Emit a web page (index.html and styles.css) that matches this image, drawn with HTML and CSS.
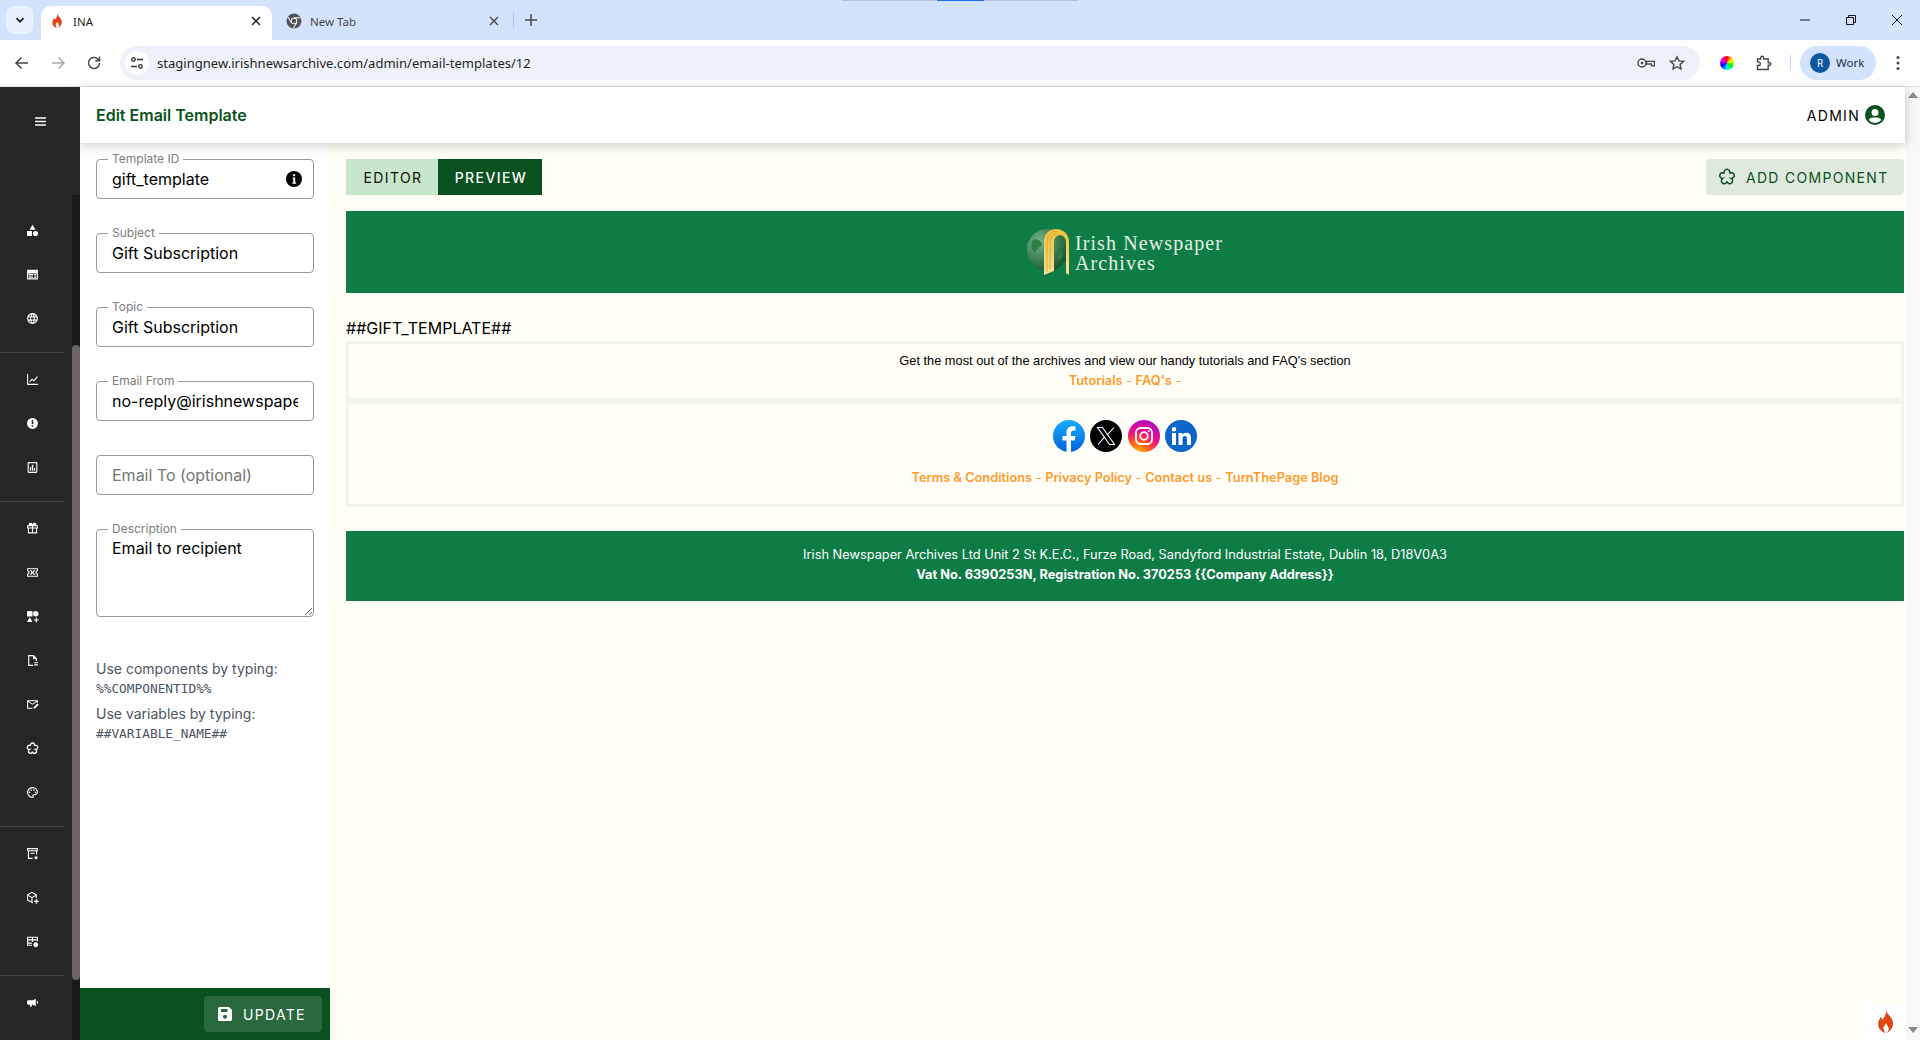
FILE: index.html
```html
<!DOCTYPE html>
<html lang="en">
<head>
  <meta charset="UTF-8">
  <meta name="viewport" content="width=device-width, initial-scale=1.0">
  <title>INA</title>
  <link rel="stylesheet" href="styles.css">
</head>
<body>
  <div class="share-bar"><span class="share-blue"></span></div>

  <!-- browser chrome -->
  <div class="tabstrip">
    <div class="tab-search">
      <svg width="12" height="12" viewBox="0 0 12 12"><path d="M2.500 4.200 6 7.700l3.500-3.500" fill="none" stroke="#1f1f1f" stroke-width="1.700"/></svg>
    </div>
    <div class="tab tab-active">
      <svg class="fav" width="16" height="16" viewBox="2 0 20 24"><path class="flame" d="M12.500 1c.8 3.500 5.500 5.800 6.500 10.500 1 5.300-2.500 9.800-6 11 2-1.500 2.800-3.800 1.500-6-.5-.9-1.500-1.500-1.700-3-1.200 1-2.300 2.200-2.600 3.600-.4 2 .5 4 1.800 5.400-4-1-7.500-4.500-7-9.500.2-2.500 1.700-3.800 2.500-6 .9.800 1.300 1.800 1.500 3C10.500 7.500 13 5 12.500 1z"/></svg>
      <span class="tab-title">INA</span>
      <svg class="tab-x" width="10" height="10" viewBox="0 0 10 10"><path d="M1 1l8 8M9 1L1 9" stroke="#1f1f1f" stroke-width="1.500"/></svg>
    </div>
    <div class="tab tab-idle">
      <svg class="fav" width="16" height="16" viewBox="0 0 16 16"><circle cx="8" cy="8" r="7.500" fill="#50555b"/><circle cx="8" cy="8" r="3.200" fill="#fff"/><circle cx="8" cy="8" r="2.300" fill="#50555b"/><path d="M8 4.800h6.500M5.200 9.600L2 4M10.800 9.600L7.500 15" stroke="#fff" stroke-width="1"/></svg>
      <span class="tab-title">New Tab</span>
      <svg class="tab-x" width="10" height="10" viewBox="0 0 10 10"><path d="M1 1l8 8M9 1L1 9" stroke="#474747" stroke-width="1.400"/></svg>
    </div>
    <span class="tab-sep"></span>
    <svg class="tab-plus" width="12" height="12" viewBox="0 0 12 12"><path d="M6 0v12M0 6h12" stroke="#474747" stroke-width="1.500"/></svg>
    <div class="win-controls">
      <svg width="12" height="12" viewBox="0 0 12 12"><path d="M1 6h10" stroke="#111" stroke-width="1"/></svg>
      <svg width="12" height="12" viewBox="0 0 12 12"><path d="M1.500 3.500h7v7h-7zM3.500 3.500v-2h7v7h-2" fill="none" stroke="#111" stroke-width="1"/></svg>
      <svg width="12" height="12" viewBox="0 0 12 12"><path d="M1 1l10 10M11 1L1 11" stroke="#111" stroke-width="1"/></svg>
    </div>
  </div>

  <div class="toolbar">
    <svg class="tool" width="16" height="16" viewBox="0 0 16 16"><path d="M14 8H2.500M7.500 2.500L2 8l5.500 5.500" fill="none" stroke="#474747" stroke-width="1.500"/></svg>
    <svg class="tool" width="16" height="16" viewBox="0 0 16 16"><path d="M2 8h11.500M8.500 2.500L14 8l-5.500 5.500" fill="none" stroke="#a9abad" stroke-width="1.500"/></svg>
    <svg class="tool" width="16" height="16" viewBox="0 0 16 16"><path d="M13.500 8a5.500 5.500 0 1 1-1.600-3.900L13.500 5.700M13.500 1.500v4.200H9.300" fill="none" stroke="#474747" stroke-width="1.500"/></svg>
    <div class="omnibox">
      <span class="site-info">
        <svg width="14" height="14" viewBox="0 0 14 14"><circle cx="3.500" cy="3.500" r="1.800" fill="none" stroke="#333" stroke-width="1.300"/><circle cx="10.500" cy="10.500" r="1.800" fill="none" stroke="#333" stroke-width="1.300"/><path d="M7 3.500h6M1 10.500h6" stroke="#333" stroke-width="1.300"/></svg>
      </span>
      <span class="url">stagingnew.irishnewsarchive.com/admin/email-templates/12</span>
      <svg class="omni-key" width="18" height="10" viewBox="0 0 18 10"><circle cx="5" cy="5" r="4" fill="none" stroke="#474747" stroke-width="1.400"/><circle cx="5" cy="5" r="1.300" fill="#474747"/><path d="M9.500 3.300h8v4.500h-3V6h-5z" fill="none" stroke="#474747" stroke-width="1.300"/></svg>
      <svg class="omni-star" width="16" height="16" viewBox="0 0 16 16"><path d="M8 1.800l1.900 4.100 4.500.5-3.300 3 .9 4.500L8 11.700l-4 2.200.9-4.500-3.300-3 4.500-.5z" fill="none" stroke="#474747" stroke-width="1.400"/></svg>
    </div>
    <span class="wheel"></span>
    <svg class="ext" width="16" height="16" viewBox="0 0 16 16"><path d="M1.500 4h3.200V2.700a1.500 1.500 0 0 1 3 0V4h4.500v3.700h1.300a1.300 1.300 0 0 1 0 2.600h-1.300v4.200h-10.700v-4h1a1.800 1.800 0 0 0 0-3.600h-1z" fill="none" stroke="#474747" stroke-width="1.400"/></svg>
    <span class="tool-sep"></span>
    <div class="profile"><span class="avatar">R</span><span class="profile-name">Work</span></div>
    <svg class="kebab" width="4" height="16" viewBox="0 0 4 16"><circle cx="2" cy="2.500" r="1.500" fill="#474747"/><circle cx="2" cy="8" r="1.500" fill="#474747"/><circle cx="2" cy="13.500" r="1.500" fill="#474747"/></svg>
  </div>

  <div class="app">
    <aside class="sidebar">
      <div class="side-col">
        <div class="nav-item nav-menu">
          <svg viewBox="0 0 24 24"><path d="M2 4h20v3H2zM2 10.500h20v3H2zM2 17h20v3H2z"/></svg>
        </div>
        <div class="nav-group nav-first">
          <div class="nav-item"><svg viewBox="0 0 24 24"><path d="M12 1.500l5.500 9h-11zM2 13h9v9H2z"/><circle cx="17.500" cy="17.500" r="4.700"/></svg></div>
          <div class="nav-item"><svg viewBox="0 0 24 24"><path fill-rule="evenodd" d="M2 3h20v18H2zM4 10v9h16v-9zM5 11h8v3H5zM15 11h4v3h-4zM5 15.500h8V18H5zM15 15.500h4V18h-4z"/></svg></div>
          <div class="nav-item"><svg viewBox="0 0 24 24"><path d="M11.990 2C6.470 2 2 6.480 2 12s4.470 10 9.990 10C17.520 22 22 17.520 22 12S17.520 2 11.990 2zm6.930 6h-2.950c-.32-1.250-.78-2.450-1.380-3.560 1.840.63 3.370 1.910 4.330 3.560zM12 4.040c.83 1.200 1.480 2.530 1.910 3.960h-3.820c.43-1.430 1.080-2.760 1.910-3.960zM4.260 14C4.100 13.360 4 12.690 4 12s.1-1.360.26-2h3.380c-.08.66-.14 1.320-.14 2 0 .68.06 1.340.14 2H4.260zm.82 2h2.950c.32 1.250.78 2.450 1.380 3.560-1.840-.63-3.370-1.900-4.330-3.560zm2.950-8H5.080c.96-1.660 2.490-2.930 4.330-3.560C8.810 5.550 8.350 6.750 8.030 8zM12 19.960c-.83-1.200-1.480-2.530-1.910-3.960h3.820c-.43 1.430-1.080 2.760-1.910 3.960zM14.340 14H9.660c-.09-.66-.16-1.320-.16-2 0-.68.07-1.350.16-2h4.680c.09.65.16 1.320.16 2 0 .68-.07 1.340-.16 2zm.25 5.560c.6-1.110 1.060-2.310 1.380-3.560h2.950c-.96 1.650-2.490 2.930-4.330 3.560zM16.360 14c.08-.66.14-1.320.14-2 0-.68-.06-1.340-.14-2h3.380c.16.64.26 1.310.26 2s-.1 1.360-.26 2h-3.380z"/></svg></div>
        </div>
        <div class="nav-group">
          <div class="nav-item"><svg viewBox="0 0 24 24"><path d="M2 2h2v18h18v2H2zM6 15.500l5-5.500 3.500 3L20.500 6 22 7.300l-7.300 8.400-3.500-3-3.800 4.200z"/></svg></div>
          <div class="nav-item"><svg viewBox="0 0 24 24"><path d="M12 2C6.480 2 2 6.480 2 12s4.480 10 10 10 10-4.480 10-10S17.520 2 12 2zm1.500 16h-3v-3h3v3zm0-5h-3V6h3v7z"/></svg></div>
          <div class="nav-item"><svg viewBox="0 0 24 24"><path d="M19 2H5C3.900 2 3 2.900 3 4v16c0 1.100.9 2 2 2h14c1.100 0 2-.9 2-2V4c0-1.100-.9-2-2-2zm0 18H5V4h14v16z"/><path d="M7 11h2.500v7H7zM10.800 7h2.500v11h-2.500zM14.500 13H17v5h-2.500z"/></svg></div>
        </div>
        <div class="nav-group">
          <div class="nav-item"><svg viewBox="0 0 24 24"><path fill-rule="evenodd" d="M8 1.500c1.800 0 3.200 1 4 2.500.8-1.500 2.200-2.500 4-2.500 2 0 3 1.500 3 3 0 .6-.1 1-.3 1.500H21c.6 0 1 .4 1 1V12h-1.500v8c0 .6-.4 1-1 1h-15c-.6 0-1-.4-1-1v-8H2V7c0-.6.4-1 1-1h2.300C5.100 5.500 5 5.100 5 4.500c0-1.500 1-3 3-3zM5.500 12v7H11v-7zM13 12v7h5.500v-7zM4 8v2h7V8zM13 8v2h7V8z"/></svg></div>
          <div class="nav-item"><svg viewBox="0 0 24 24"><path fill-rule="evenodd" d="M2 4h20v5.500a2.500 2.500 0 0 0 0 5V20H2v-5.500a2.500 2.500 0 0 0 0-5zM4 6v2.200a4 4 0 0 1 0 7.600V18h16v-2.200a4 4 0 0 1 0-7.600V6zM7 8h3l2 2.500L14 8h3l-3 4 3 4h-3l-2-2.500L10 16H7l3-4z"/></svg></div>
          <div class="nav-item"><svg viewBox="0 0 24 24"><path d="M2 2h10v10H2z"/><circle cx="18" cy="7" r="5"/><path d="M7 13.500l5 8.500H2zM18 14h2v3.500h3.500v2H20V23h-2v-3.500h-3.500v-2H18z"/></svg></div>
          <div class="nav-item"><svg viewBox="0 0 24 24"><path d="M4 2h10l6 6v5h-2V9h-5V4H6v16h7v2H4zM15 15h7v2h-7zM15 19h7v2h-7z"/></svg></div>
          <div class="nav-item"><svg viewBox="0 0 24 24"><path d="M2 4h20v4l-2 2V7.500l-8 5-8-5V18h9l-2 2H2zM4.500 6l7.500 4.700L19.500 6zM14 17l7-7 2.500 2.500-7 7H14z"/></svg></div>
          <div class="nav-item"><svg viewBox="0 0 24 24"><path class="piece" d="M8.500 7.100A3.800 3.800 0 1 1 15.500 7.100A3.800 3.800 0 1 1 17.700 13.850A3.800 3.800 0 1 1 12 18A3.800 3.800 0 1 1 6.300 13.850A3.800 3.800 0 1 1 8.500 7.100z"/></svg></div>
          <div class="nav-item"><svg viewBox="0 0 24 24"><path d="M12 22C6.490 22 2 17.510 2 12S6.490 2 12 2s10 4.040 10 9c0 3.310-2.690 6-6 6h-1.770c-.28 0-.5.22-.5.5 0 .12.05.23.13.33.41.47.64 1.060.64 1.670 0 1.380-1.120 2.500-2.500 2.500zm0-18c-4.410 0-8 3.590-8 8s3.590 8 8 8c.28 0 .5-.22.5-.5 0-.16-.08-.28-.14-.35-.41-.46-.63-1.050-.63-1.650 0-1.380 1.120-2.500 2.500-2.500H16c2.210 0 4-1.790 4-4 0-3.860-3.590-7-8-7z"/><circle cx="6.500" cy="11.500" r="1.500"/><circle cx="9.500" cy="7.500" r="1.500"/><circle cx="14.500" cy="7.500" r="1.500"/><circle cx="17.500" cy="11.500" r="1.500"/></svg></div>
        </div>
        <div class="nav-group">
          <div class="nav-item"><svg viewBox="0 0 24 24"><path d="M2 2h20v6h-1.500v6h-2V8h-13v12H12v2H3.500V8H2zM4 4v2h16V4zM8 10.500h8v2H8zM18.500 15.500l1.200 2.500 2.800.3-2 2 .5 2.700-2.500-1.400-2.500 1.400.5-2.700-2-2 2.800-.3z"/></svg></div>
          <div class="nav-item"><svg viewBox="0 0 24 24"><path fill-rule="evenodd" d="M11 1.500l9 5v6.300h-2V9l-6 3.400V20l1 .5V23l-2-1-9-5V6.500zM4.200 7.500L11 11.200l6.800-3.700L11 3.800zM3.800 9v6.800l6.200 3.500v-6.900zM18 15h2.500v3h3v2.500h-3v3H18v-3h-3V18h3z"/></svg></div>
          <div class="nav-item"><svg viewBox="0 0 24 24"><path fill-rule="evenodd" d="M2 3h20v8.500h-2V10h-7v3h-2v-3H4v4h7v2H4v2h7v2H2zM4 5v3h7V5zM13 5v3h7V5z"/><circle cx="18" cy="18" r="4.500"/></svg></div>
        </div>
        <div class="nav-group nav-last">
          <div class="nav-item"><svg viewBox="0 0 24 24"><path d="M4 8h9l5-3v14l-5-3h-2l-1 4H7l1-4H4c-1.100 0-2-.9-2-2v-4c0-1.100.9-2 2-2zM20 8.500c1.300.7 2 2 2 3.500s-.7 2.800-2 3.500z"/></svg></div>
        </div>
      </div>
      <div class="side-scroll"><div class="side-thumb"></div></div>
    </aside>

    <div class="content">
      <header class="topbar">
        <h1 class="page-title">Edit Email Template</h1>
        <div class="admin">
          <span>ADMIN</span>
          <svg width="20" height="20" viewBox="0 0 20 20"><path fill="#0a5120" d="M10 0a10 10 0 1 0 0 20 10 10 0 0 0 0-20zm0 4a3.500 3.500 0 1 1 0 7 3.500 3.500 0 0 1 0-7zm0 14a8 8 0 0 1-6.300-3c.6-1.500 2.300-2.600 4.300-2.600h4c2 0 3.700 1.100 4.300 2.600A8 8 0 0 1 10 18z"/></svg>
        </div>
      </header>

      <div class="workspace">
        <section class="panel">
          <div class="panel-fields">
            <fieldset class="field">
              <legend>Template ID</legend>
              <div class="field-row">
                <input type="text" value="gift_template">
                <svg class="info" width="16" height="16" viewBox="0 0 16 16"><circle cx="8" cy="8" r="8" fill="#000"/><path fill="#fff" d="M6.600 6.500h2.600v5h1v1.300H6.300v-1.300h1V7.800h-.7zM7.100 3.200h2.100v2H7.100z"/></svg>
              </div>
            </fieldset>
            <fieldset class="field">
              <legend>Subject</legend>
              <input type="text" value="Gift Subscription">
            </fieldset>
            <fieldset class="field">
              <legend>Topic</legend>
              <input type="text" value="Gift Subscription">
            </fieldset>
            <fieldset class="field">
              <legend>Email From</legend>
              <input type="text" value="no-reply@irishnewspaperarchives.com">
            </fieldset>
            <input class="plain-input" type="text" placeholder="Email To (optional)">
            <fieldset class="field field-area">
              <legend>Description</legend>
              <textarea rows="3">Email to recipient</textarea>
            </fieldset>
            <div class="help">
              <p>Use components by typing:</p>
              <code>%%COMPONENTID%%</code>
              <p>Use variables by typing:</p>
              <code>##VARIABLE_NAME##</code>
            </div>
          </div>
          <div class="panel-foot">
            <button class="update-btn">
              <svg width="14" height="14" viewBox="0 0 14 14"><path fill="#fff" fill-rule="evenodd" d="M1.500 0H11l3 3v9.500a1.500 1.500 0 0 1-1.500 1.500h-11A1.500 1.500 0 0 1 0 12.500v-11A1.500 1.500 0 0 1 1.500 0zM3 2v3h6.500V2zm4 5.800a2 2 0 1 0 0 4 2 2 0 0 0 0-4z"/></svg>
              UPDATE
            </button>
          </div>
        </section>

        <main class="preview">
          <div class="preview-actions">
            <div class="tabs">
              <button class="tab-btn">EDITOR</button>
              <button class="tab-btn tab-btn-on">PREVIEW</button>
            </div>
            <button class="add-btn">
              <svg width="18" height="18" viewBox="0 0 24 24"><path class="piece-green" d="M8.500 7.100A3.800 3.800 0 1 1 15.500 7.100A3.800 3.800 0 1 1 17.700 13.850A3.800 3.800 0 1 1 12 18A3.800 3.800 0 1 1 6.300 13.850A3.800 3.800 0 1 1 8.500 7.100z"/></svg>
              ADD COMPONENT
            </button>
          </div>

          <div class="mail-banner">
            <svg class="logo-mark" width="43" height="48" viewBox="0 0 43 48">
              <defs>
                <radialGradient id="globe" cx="30%" cy="30%" r="80%"><stop offset="0" stop-color="#74b488"/><stop offset="1" stop-color="#12522c"/></radialGradient>
                <linearGradient id="gold" x1="0" y1="0" x2="0" y2="1"><stop offset="0" stop-color="#eec23a"/><stop offset="1" stop-color="#f6e09a"/></linearGradient>
              </defs>
              <circle cx="20.500" cy="22" r="21" fill="url(#globe)"/>
              <path d="M6 12c-3 6-2 10 2 13 1-4 5-6 7-8-1-5-5-7-9-5zM31 24c3-1 5 1 5 4-2 3-4 5-6 3z" fill="#2f7d48"/>
              <path d="M17 47V14C17 6 22 1 29 1s13 5 13 13v33l-3-2V14c0-4-3-7-6-7s-6 3-6 7v29z" fill="url(#gold)"/>
              <path d="M20 44V14C20 7 25 3 30 3M23 41V14c0-5 3-8 7-8" fill="none" stroke="#c99a22" stroke-width=".7"/>
            </svg>
            <div class="logo-text">Irish Newspaper<br>Archives</div>
          </div>

          <div class="mail-var">##GIFT_TEMPLATE##</div>

          <div class="mail-box mail-help">
            <div class="help-line">Get the most out of the archives and view our handy tutorials and FAQ's section</div>
            <div class="links"><b>Tutorials</b> - <b>FAQ's</b> -</div>
          </div>

          <div class="mail-box mail-social">
            <div class="socials">
              <svg width="32" height="32" viewBox="0 0 32 32">
                <defs><linearGradient id="fb" x1="0" y1="0" x2="0" y2="1"><stop offset="0" stop-color="#18acfe"/><stop offset="1" stop-color="#0163e0"/></linearGradient></defs>
                <circle cx="16" cy="16" r="16" fill="url(#fb)"/>
                <path fill="#fff" d="M13.500 32V20.500H9.500V16h4v-3.500c0-4 2.400-6.200 6-6.200 1.700 0 3 .2 3 .2v3.900h-1.900c-2 0-2.600 1.200-2.600 2.500V16h4.400l-.7 4.500h-3.700V32z"/>
              </svg>
              <svg width="32" height="32" viewBox="0 0 32 32">
                <circle cx="16" cy="16" r="16" fill="#000"/>
                <path fill="none" stroke="#fff" stroke-width="1.100" d="M7.500 7.500h5l12 17h-5zM24 7.500l-7 7.700M8 24.500l7-7.800"/>
              </svg>
              <svg width="32" height="32" viewBox="0 0 32 32">
                <defs><radialGradient id="ig" cx="30%" cy="105%" r="110%"><stop offset="0" stop-color="#fec30a"/><stop offset=".35" stop-color="#fb5b1f"/><stop offset=".65" stop-color="#ee0a8c"/><stop offset="1" stop-color="#a90fc4"/></radialGradient></defs>
                <circle cx="16" cy="16" r="16" fill="url(#ig)"/>
                <rect x="8" y="8" width="16" height="16" rx="4.500" fill="none" stroke="#fff" stroke-width="1.800"/>
                <circle cx="16" cy="16" r="3.800" fill="none" stroke="#fff" stroke-width="1.800"/>
                <circle cx="20.800" cy="11.200" r="1" fill="#fff"/>
              </svg>
              <svg width="32" height="32" viewBox="0 0 32 32">
                <circle cx="16" cy="16" r="16" fill="#0a66c8"/>
                <path fill="#fff" d="M7 13h4v12H7zM9 7a2.300 2.300 0 1 1 0 4.600A2.300 2.300 0 0 1 9 7zM13.500 13h3.800v1.700c.7-1.200 2.100-2 3.900-2 3.300 0 4.800 2 4.800 5.500V25h-4v-6c0-1.700-.6-2.900-2.200-2.900-1.500 0-2.300 1.100-2.300 2.900v6h-4z"/>
              </svg>
            </div>
            <div class="links links-foot"><b>Terms &amp; Conditions</b> - <b>Privacy Policy</b> - <b>Contact us</b> - <b>TurnThePage Blog</b></div>
          </div>

          <div class="mail-footer">
            <div>Irish Newspaper Archives Ltd Unit 2 St K.E.C., Furze Road, Sandyford Industrial Estate, Dublin 18, D18V0A3</div>
            <div class="mail-footer-strong">Vat No. 6390253N, Registration No. 370253 {{Company Address}}</div>
          </div>
        </main>
      </div>
    </div>

    <div class="page-scroll">
      <svg width="10" height="6" viewBox="0 0 10 6"><path d="M5 0l5 6H0z" fill="#8a8a8a"/></svg>
      <svg width="10" height="6" viewBox="0 0 10 6"><path d="M5 6l5-6H0z" fill="#8a8a8a"/></svg>
    </div>

    <div class="debug-flame">
      <svg width="19" height="24" viewBox="3.500 0.500 17 23"><path class="flame" d="M12.500 1c.8 3.500 5.500 5.800 6.500 10.500 1 5.300-2.500 9.800-6 11 2-1.500 2.800-3.800 1.500-6-.5-.9-1.500-1.500-1.700-3-1.200 1-2.300 2.200-2.600 3.600-.4 2 .5 4 1.800 5.400-4-1-7.500-4.500-7-9.500.2-2.500 1.700-3.800 2.500-6 .9.800 1.300 1.800 1.500 3C10.500 7.500 13 5 12.500 1z"/></svg>
    </div>
  </div>
</body>
</html>
```

FILE: styles.css
```css
* {
  box-sizing: border-box;
}
html, body {
  margin: 0;
  height: 1040px;
  overflow: hidden;
}
body {
  display: flex;
  flex-direction: column;
  font-family: Inter, "Noto Sans", sans-serif;
  color: #000;
  position: relative;
}
button {
  font-family: inherit;
  border: none;
  cursor: pointer;
}
.flame {
  fill: #dd4814;
}

/* browser chrome */
.share-bar {
  position: absolute;
  top: 0;
  left: 842px;
  width: 236px;
  height: 1px;
  background: #b9c4d4;
}
.share-blue {
  display: block;
  width: 47px;
  height: 1px;
  margin-left: 95px;
  background: #1a73e8;
}
.tabstrip {
  height: 40px;
  flex: none;
  display: flex;
  align-items: flex-end;
  background: #d3e3fd;
  padding-left: 6px;
}
.tab-search {
  width: 27px;
  height: 28px;
  margin-bottom: 6px;
  margin-right: 8px;
  border-radius: 8px;
  background: #e9f1fe;
  display: flex;
  align-items: center;
  justify-content: center;
}
.tab {
  height: 34px;
  width: 231px;
  display: flex;
  align-items: center;
  padding: 0 11px 4px 8px;
  font-family: "Noto Sans", sans-serif;
  font-size: 11.500px;
}
.tab-active {
  background: #fff;
  border-radius: 10px 10px 0 0;
  padding-left: 8px;
  color: #1f1f1f;
}
.tab-idle {
  color: #474747;
  width: 241px;
  padding-left: 14px;
  padding-right: 14px;
}
.fav {
  flex: none;
  margin-right: 8px;
}
.tab-title {
  flex: 1;
}
.tab-sep {
  width: 1px;
  height: 16px;
  margin: 0 0 12px 0;
  background: #a8c7fa;
}
.tab-plus {
  margin: 0 0 14px 11px;
}
.win-controls {
  margin-left: auto;
  width: 138px;
  padding: 0 17px;
  display: flex;
  justify-content: space-between;
  align-self: flex-start;
  margin-top: 14px;
}
.toolbar {
  height: 47px;
  flex: none;
  display: flex;
  align-items: center;
  background: #fff;
  border-bottom: 1px solid #e0e0e0;
  padding: 0 0 1px 14px;
  border-radius: 10px 10px 0 0;
}
.tool {
  margin-right: 20px;
}
.omnibox {
  width: 1580px;
  height: 34px;
  margin-left: -2px;
  border-radius: 17px;
  background: #edf2fa;
  display: flex;
  align-items: center;
  padding: 0 11px 0 5px;
}
.site-info {
  width: 24px;
  height: 24px;
  border-radius: 50%;
  background: #fff;
  display: flex;
  align-items: center;
  justify-content: center;
  margin-right: 8px;
}
.url {
  flex: 1;
  font-family: "Noto Sans", sans-serif;
  font-size: 13.050px;
  color: #1f1f1f;
}
.omni-key {
  margin-right: 14px;
}
.omni-star {
  margin-right: 4px;
}
.wheel {
  width: 14px;
  height: 14px;
  margin-left: 20px;
  border-radius: 50%;
  background: conic-gradient(#f00, #ff0, #0f0, #0ff, #00f, #f0f, #f00);
}
.ext {
  margin-left: 22px;
}
.tool-sep {
  width: 1px;
  height: 16px;
  margin: 0 9px 0 18px;
  background: #c2d6f5;
}
.profile {
  width: 76px;
  height: 34px;
  border-radius: 17px;
  background: #d3e3fd;
  display: flex;
  align-items: center;
  padding-left: 10px;
  font-family: "Noto Sans", sans-serif;
  font-size: 11.500px;
  color: #1f2a44;
}
.avatar {
  width: 20px;
  height: 20px;
  border-radius: 50%;
  background: #0b57a0;
  color: #fff;
  font-size: 10px;
  display: flex;
  align-items: center;
  justify-content: center;
  margin-right: 6px;
}
.kebab {
  margin-left: 20px;
}

/* app shell */
.app {
  flex: 1;
  min-height: 0;
  display: flex;
  position: relative;
}
.sidebar {
  width: 80px;
  flex: none;
  display: flex;
  background: #262626;
}
.side-col {
  width: 72px;
  flex: none;
  padding-top: 12px;
}
.side-scroll {
  width: 8px;
  margin-top: 108px;
  padding-top: 150px;
  background: #1a1a1a;
}
.side-thumb {
  height: 635px;
  border-radius: 4px;
  background: #6b6464;
}
.nav-item {
  width: 64px;
  height: 44px;
  display: flex;
  align-items: center;
  justify-content: center;
}
.nav-item svg {
  width: 13px;
  height: 13px;
  fill: #fff;
}
.nav-menu {
  padding-left: 16px;
}
.nav-item .piece {
  fill: none;
  stroke: #fff;
  stroke-width: 2.500;
}
.nav-group {
  width: 64px;
  padding: 4px 0 12px;
  border-bottom: 1px solid #444;
}
.nav-first {
  margin-top: 61px;
}
.nav-last {
  border-bottom: none;
}
.content {
  flex: 1;
  min-width: 0;
  display: flex;
  flex-direction: column;
}
.page-scroll {
  width: 15px;
  flex: none;
  background: #f8f8f8;
  display: flex;
  flex-direction: column;
  justify-content: space-between;
  align-items: center;
  padding: 5px 0 7px;
}
.topbar {
  height: 56px;
  flex: none;
  background: #fff;
  display: flex;
  align-items: center;
  justify-content: space-between;
  padding: 0 20px 0 16px;
  box-shadow: 0 2px 10px rgba(60, 60, 40, .28);
  position: relative;
  z-index: 2;
}
.page-title {
  margin: 0;
  font-size: 16px;
  font-weight: 600;
  color: #0a5120;
}
.admin {
  display: flex;
  align-items: center;
  gap: 5px;
  font-size: 14px;
  font-weight: 400;
  letter-spacing: 1.300px;
}
.workspace {
  flex: 1;
  min-height: 0;
  display: flex;
}

/* left form */
.panel {
  width: 250px;
  flex: none;
  background: #fff;
  display: flex;
  flex-direction: column;
}
.panel-fields {
  flex: 1;
  padding: 10px 16px 0;
  display: flex;
  flex-direction: column;
  gap: 28px;
}
.field {
  margin: 0;
  padding: 0 0 5px;
  min-width: 0;
  border: 1px solid #999;
  border-radius: 4px;
}
.field legend {
  margin-left: 11px;
  padding: 0 4px;
  font-size: 12px;
  line-height: 12px;
  color: #7d7d7d;
}
.field input, .plain-input, .field textarea {
  display: block;
  width: 100%;
  border: none;
  outline: none;
  background: transparent;
  font-family: inherit;
  font-size: 16px;
  color: #000;
  padding: 0 15px;
}
.field input {
  height: 28px;
}
.field-row {
  display: flex;
  align-items: center;
}
.field-row input {
  flex: 1;
  min-width: 0;
}
.info {
  flex: none;
  margin-right: 11px;
}
.plain-input {
  height: 40px;
  margin-top: 6px;
  border: 1px solid #999;
  border-radius: 4px;
}
.plain-input::placeholder {
  color: #757575;
  opacity: 1;
}
.field-area {
  padding: 0;
}
.field textarea {
  height: 81px;
  padding: 3px 15px;
  line-height: 20px;
  resize: vertical;
}
.help {
  margin-top: 14px;
  font-size: 14px;
  color: #4b5563;
}
.help p {
  margin: 0;
  line-height: 20px;
}
.help code {
  display: block;
  margin-bottom: 5px;
  font-family: "DejaVu Sans Mono", monospace;
  font-size: 12.800px;
  line-height: 20px;
}
.panel-foot {
  height: 52px;
  flex: none;
  background: #0a5120;
  display: flex;
  align-items: center;
  justify-content: flex-end;
  padding-right: 8px;
}
.update-btn {
  width: 118px;
  height: 36px;
  display: flex;
  align-items: center;
  gap: 11px;
  padding-left: 14px;
  border-radius: 4px;
  background: #2a693d;
  color: #fff;
  font-size: 14px;
  font-weight: 400;
  letter-spacing: 1.300px;
}

/* right preview */
.preview {
  flex: 1;
  min-width: 0;
  background: #fffff7;
  padding: 16px 1px 0 16px;
}
.preview-actions {
  display: flex;
  justify-content: space-between;
}
.tabs {
  display: flex;
}
.tab-btn {
  height: 36px;
  width: 92px;
  padding: 0 0 0 2px;
  background: #c8e6cb;
  color: #111;
  font-size: 14px;
  font-weight: 400;
  letter-spacing: 1.400px;
}
.tab-btn-on {
  width: 104px;
  background: #0a5120;
  color: #fff;
  font-weight: 500;
}
.add-btn {
  width: 198px;
  height: 36px;
  display: flex;
  align-items: center;
  gap: 10px;
  padding-left: 12px;
  border-radius: 4px;
  background: #dfe9dd;
  color: #0a5120;
  font-size: 14px;
  font-weight: 400;
  letter-spacing: 1.300px;
}
.piece-green {
  fill: none;
  stroke: #0a5120;
  stroke-width: 2;
}
.mail-banner {
  height: 82px;
  margin-top: 16px;
  background: #0e7c45;
  display: flex;
  align-items: center;
  justify-content: center;
  gap: 5px;
}
.logo-text {
  font-family: "Liberation Serif", serif;
  font-size: 20px;
  line-height: 20px;
  color: #e4efe6;
  letter-spacing: 1.100px;
  padding-top: 2px;
}
.mail-var {
  margin-top: 25px;
  padding-bottom: 2px;
  font-size: 16px;
  line-height: 21px;
}
.mail-box {
  border: 3px solid #f3f4ea;
  text-align: center;
}
.mail-help {
  height: 60px;
  padding-top: 7px;
}
.help-line {
  font-family: "Liberation Sans", sans-serif;
  font-size: 12.800px;
  line-height: 20px;
}
.links {
  font-size: 12.800px;
  line-height: 20px;
  color: #ff9a2e;
}
.links b {
  font-weight: 600;
}
.mail-social {
  height: 106px;
  padding-top: 16px;
}
.socials {
  display: flex;
  justify-content: center;
  gap: 5.330px;
}
.links-foot {
  margin-top: 16px;
}
.mail-footer {
  height: 70px;
  margin-top: 24px;
  padding-top: 14px;
  background: #0e7c45;
  color: #fff;
  text-align: center;
  font-size: 12.800px;
  line-height: 20px;
}
.mail-footer-strong {
  font-weight: 700;
}
.debug-flame {
  position: absolute;
  right: 15px;
  bottom: 0;
  width: 36px;
  height: 36px;
  padding-right: 4px;
  background: #fff;
  display: flex;
  align-items: center;
  justify-content: center;
}
```
